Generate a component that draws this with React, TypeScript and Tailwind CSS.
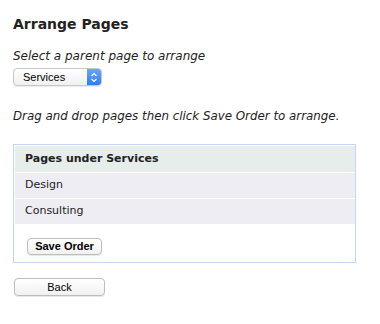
import React from "react";

export default function App() {
  return (
    <div className="w-[380px] h-[324px] bg-white text-[#222] pl-[13px] pt-[15px]" style={{ fontFamily: '"DejaVu Sans", Verdana, sans-serif' }}>
      <h1 className="text-[14px] font-bold leading-[18px] m-0">Arrange Pages</h1>
      <p className="italic text-[12px] leading-[16px] mt-[15px]">Select a parent page to arrange</p>
      <div className="mt-[4px] w-[89px] h-[18px] flex rounded-[4px] border border-[#c8c8c8] bg-gradient-to-b from-white to-[#f0f0f0] shadow-[0_1px_1px_rgba(0,0,0,0.08)] overflow-hidden">
        <div className="flex-1 text-[11px] leading-[16px] pl-[9px] text-black" style={{ fontFamily: '"Liberation Sans", Arial, sans-serif' }}>Services</div>
        <div className="w-[14px] h-full bg-gradient-to-b from-[#6aa8f7] to-[#2f7bf0] flex items-center justify-center">
          <svg width="8" height="11" viewBox="0 0 8 11">
            <path d="M1.5 4 L4 1.5 L6.5 4" fill="none" stroke="white" strokeWidth="1.2" />
            <path d="M1.5 7 L4 9.5 L6.5 7" fill="none" stroke="white" strokeWidth="1.2" />
          </svg>
        </div>
      </div>
      <p className="italic text-[11.85px] leading-[16px] mt-[22px]">Drag and drop pages then click Save Order to arrange.</p>
      <div className="mt-[20px] w-[343px] border border-[#c3d6f7] pt-[1px] pl-[1px] pb-[7px]">
        <div className="h-[26px] bg-[#e6edeb] text-[11px] font-bold flex items-center pl-[10px]">Pages under Services</div>
        <div className="mt-[1px] h-[25px] bg-[#eeedf3] text-[11px] flex items-center pl-[10px]">Design</div>
        <div className="mt-[1px] h-[25px] bg-[#eeedf3] text-[11px] flex items-center pl-[10px]">Consulting</div>
        <div className="pl-[12px] mt-[14px] flex">
          <button className="w-[75px] h-[17px] rounded-[4px] border border-[#bdbdbd] bg-gradient-to-b from-white to-[#f1f1f1] shadow-[0_1px_1px_rgba(0,0,0,0.1)] text-[11px] font-bold text-black leading-[15px]" style={{ fontFamily: '"Liberation Sans", Arial, sans-serif' }}>Save Order</button>
        </div>
      </div>
      <div className="flex mt-[15px] ml-[1px]">
        <button className="w-[91px] h-[18px] rounded-[4px] border border-[#bdbdbd] bg-gradient-to-b from-white to-[#f1f1f1] shadow-[0_1px_1px_rgba(0,0,0,0.1)] text-[11px] text-black leading-[16px]" style={{ fontFamily: '"Liberation Sans", Arial, sans-serif' }}>Back</button>
      </div>
    </div>
  );
}
